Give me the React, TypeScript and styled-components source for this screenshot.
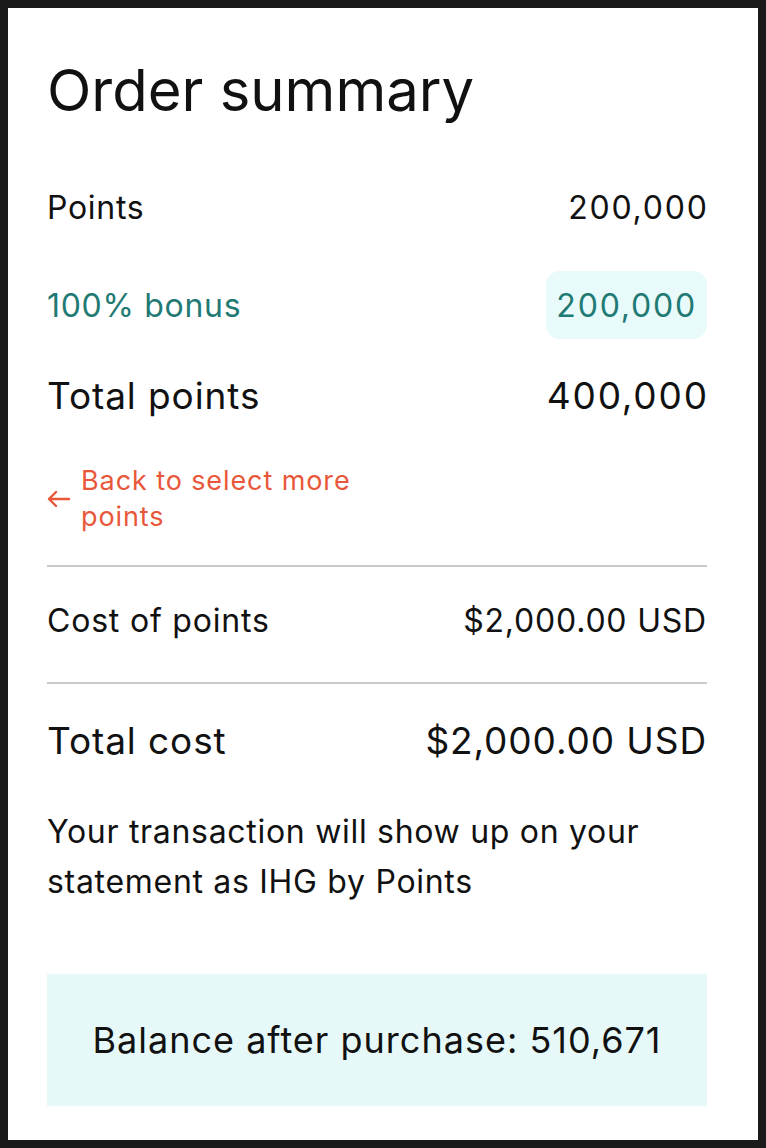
import React from "react";
import styled, { createGlobalStyle } from "styled-components";

const Global = createGlobalStyle`
  html, body { margin: 0; padding: 0; background: #1a1a1a; }
  body { padding: 8px; font-family: Inter, "Noto Sans", sans-serif; color: #111; }
  * { box-sizing: border-box; }
`;

const Card = styled.div`
  background: #fff;
  width: 750px;
  min-height: 1132px;
  padding: 0 51px 34px 39px;
  display: flex;
  flex-direction: column;
`;

const Title = styled.h1`
  margin: 50px 0 0;
  font-size: 58px;
  line-height: 64px;
  font-weight: 400;
  color: #111;
`;

const Row = styled.div<{ $mt: number; $h: number; $size: number; $ls: number; $color?: string }>`
  display: flex;
  justify-content: space-between;
  align-items: center;
  margin-top: ${(p) => p.$mt}px;
  min-height: ${(p) => p.$h}px;
  font-size: ${(p) => p.$size}px;
  letter-spacing: ${(p) => p.$ls}px;
  color: ${(p) => p.$color || "#111"};
`;

const Value = styled.span`
  letter-spacing: 1.8px;
  margin-right: -1.8px;
`;

const Badge = styled.span`
  background: #e8faf9;
  border-radius: 14px;
  height: 68px;
  padding: 0 10px;
  display: flex;
  align-items: center;
  letter-spacing: 1.8px;
`;

const BackLink = styled.a`
  margin-top: 40px;
  display: flex;
  align-items: center;
  gap: 10px;
  color: #e8573a;
  font-size: 27px;
  letter-spacing: 0.9px;
  line-height: 36px;
  text-decoration: none;
  cursor: pointer;
  svg { flex: none; }
`;

const LinkText = styled.span`
  max-width: 300px;
`;

const Divider = styled.hr<{ $mt: number }>`
  margin: ${(p) => p.$mt}px 0 0;
  border: none;
  height: 2px;
  background: #c9c9cd;
`;

const Note = styled.p`
  margin: 39px 0 0;
  font-size: 32px;
  letter-spacing: 0.7px;
  line-height: 50px;
`;

const Balance = styled.div`
  margin-top: 67px;
  height: 132px;
  background: #e6f9f8;
  display: flex;
  align-items: center;
  justify-content: center;
  font-size: 36px;
  letter-spacing: 1px;
`;

export default function App() {
  return (
    <>
      <Global />
      <Card>
        <Title>Order summary</Title>
        <Row $mt={57} $h={56} $size={32} $ls={0.7}>
          <span>Points</span>
          <Value>200,000</Value>
        </Row>
        <Row $mt={36} $h={68} $size={32} $ls={0.7} $color="#1f7a74">
          <span>100% bonus</span>
          <Badge>200,000</Badge>
        </Row>
        <Row $mt={28} $h={56} $size={37} $ls={0.9}>
          <span>Total points</span>
          <Value>400,000</Value>
        </Row>
        <BackLink>
          <svg width="24" height="16" viewBox="0 0 24 16" fill="none" stroke="#e8573a" strokeWidth="2.4" strokeLinecap="round" strokeLinejoin="round">
            <path d="M22 8H2M9 1L2 8l7 7" />
          </svg>
          <LinkText>Back to select more points</LinkText>
        </BackLink>
        <Divider $mt={30} />
        <Row $mt={25} $h={56} $size={32} $ls={0.8}>
          <span>Cost of points</span>
          <span>$2,000.00 USD</span>
        </Row>
        <Divider $mt={34} />
        <Row $mt={28} $h={56} $size={37} $ls={0.9}>
          <span>Total cost</span>
          <span>$2,000.00 USD</span>
        </Row>
        <Note>
          Your transaction will show up on your
          <br />
          statement as IHG by Points
        </Note>
        <Balance>Balance after purchase: 510,671</Balance>
      </Card>
    </>
  );
}
